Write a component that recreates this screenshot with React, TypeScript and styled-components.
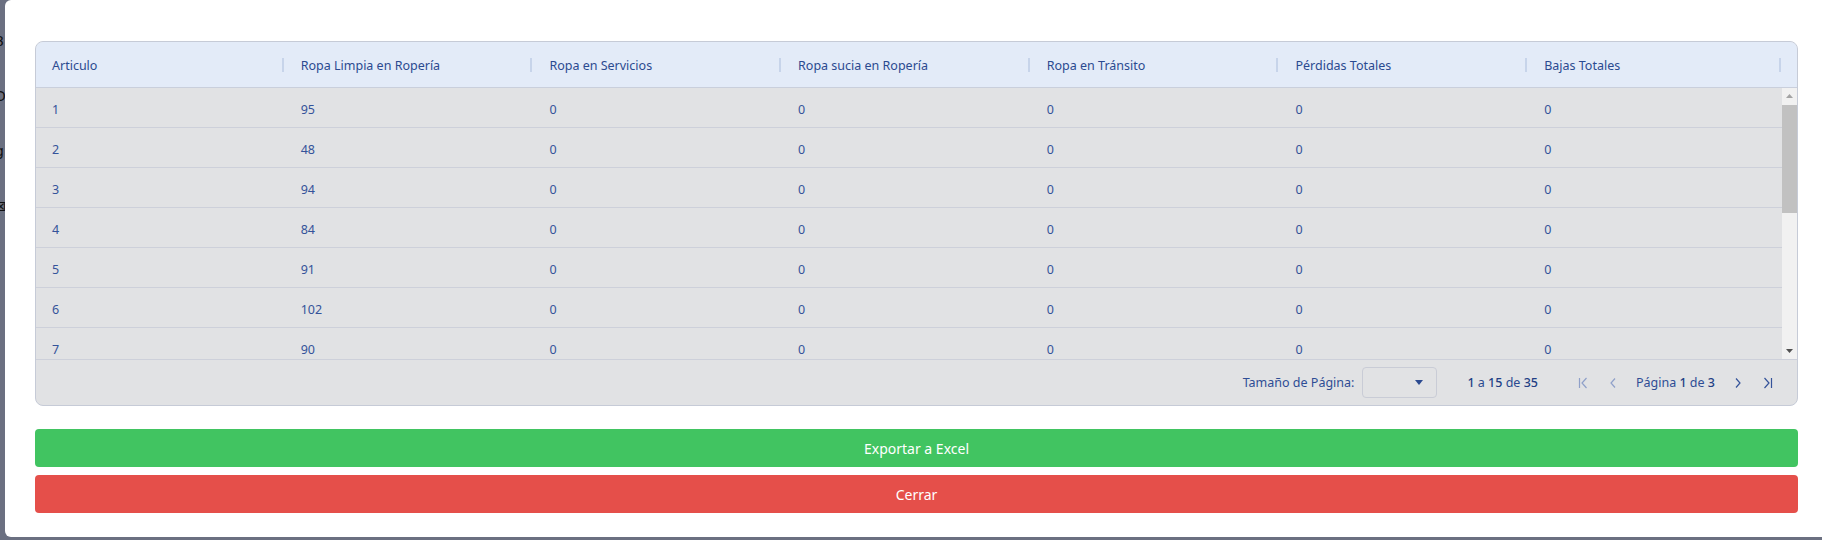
import React from "react";
import styled, { createGlobalStyle } from "styled-components";

const GlobalStyle = createGlobalStyle`
  html, body {
    margin: 0;
    padding: 0;
    background: #6b7081;
    overflow: hidden;
  }
  body {
    font-family: "Noto Sans", "Open Sans", "Liberation Sans", sans-serif;
  }
  * { box-sizing: border-box; }
`;

const Page = styled.div`
  display: flex;
  width: 1822px;
  height: 540px;
  overflow: hidden;
`;

const BehindStrip = styled.div`
  flex: none;
  width: 5px;
  overflow: hidden;
  display: flex;
  flex-direction: column;
  padding-top: 33px;
  gap: 39px;
  color: #111;
  font-family: "DejaVu Sans", sans-serif;
  font-size: 14px;
  line-height: 16px;
`;

const Glyph = styled.span`
  display: block;
  height: 16px;
  margin-left: -5px;
`;

const Modal = styled.div`
  flex: none;
  width: 1823px;
  height: 537px;
  background: #ffffff;
  border-radius: 6px;
  padding: 41px 24px 25px 30px;
  display: flex;
  flex-direction: column;
`;

const Content = styled.div`
  width: 1763px;
  display: flex;
  flex-direction: column;
`;

const Grid = styled.div`
  border: 1px solid #c6cbd7;
  border-radius: 8px;
  overflow: hidden;
  background: #e1e2e4;
  display: flex;
  flex-direction: column;
  color: #2e4d95;
  font-size: 12.5px;
`;

const COLS = "repeat(6, 248.7px) 1fr";

const HeaderRow = styled.div`
  display: grid;
  grid-template-columns: ${COLS} 15px;
  height: 46px;
  background: #e3ebf8;
  border-bottom: 1px solid #c9cfdc;
`;

const HeaderCell = styled.div`
  position: relative;
  display: flex;
  align-items: center;
  padding: 2px 16px 0 16px;
  color: #2b4a90;
  white-space: nowrap;
`;

const Separator = styled.span`
  position: absolute;
  right: 1px;
  top: 16px;
  width: 2px;
  height: 14px;
  background: #c7d4ea;
`;

const Body = styled.div`
  display: flex;
  height: 271px;
`;

const Rows = styled.div`
  flex: 1;
  overflow: hidden;
`;

const Row = styled.div`
  display: grid;
  grid-template-columns: ${COLS};
  height: 40px;
  border-bottom: 1px solid #cdd0da;
`;

const Cell = styled.div`
  display: flex;
  align-items: center;
  padding: 3px 16px 0 16px;
  color: #34539a;
  white-space: nowrap;
`;

const Scrollbar = styled.div`
  flex: none;
  width: 15px;
  background: #f1f1f1;
  display: flex;
  flex-direction: column;
  align-items: stretch;
`;

const ScrollArrow = styled.div<{ $dim?: boolean }>`
  flex: none;
  height: 16px;
  display: flex;
  align-items: center;
  justify-content: center;
  color: ${(p) => (p.$dim ? "#a3a3a3" : "#505050")};
`;

const ScrollTrack = styled.div`
  flex: 1;
  display: flex;
  flex-direction: column;
  padding: 1px 0 0 0;
`;

const Thumb = styled.div`
  height: 108px;
  background: #c1c1c1;
`;

const Footer = styled.div`
  display: flex;
  align-items: center;
  justify-content: flex-end;
  height: 46px;
  border-top: 1px solid #cdd0da;
  padding: 0 21px 0 0;
  color: #2e4d95;
  white-space: nowrap;
`;

const PageSizeLabel = styled.span`
  margin-right: 8px;
`;

const Select = styled.div`
  width: 75px;
  height: 31px;
  border: 1px solid #c9ccd6;
  border-radius: 4px;
  display: flex;
  align-items: center;
  justify-content: flex-end;
  padding-right: 13px;
  color: #2b4a90;
`;

const Summary = styled.span`
  margin-left: 30px;
  margin-right: 37px;
  color: #2b4a90;
`;

const Num = styled.span`
  font-weight: 500;
  color: #233f85;
`;

const Nav = styled.div`
  display: flex;
  align-items: center;
  gap: 14px;
`;

const NavButton = styled.span<{ $disabled?: boolean }>`
  width: 16px;
  height: 16px;
  display: flex;
  align-items: center;
  justify-content: center;
  color: ${(p) => (p.$disabled ? "#8fa0c9" : "#34539a")};
`;

const PageText = styled.span`
  padding: 0 1px;
`;

const Buttons = styled.div`
  display: flex;
  flex-direction: column;
  gap: 8px;
  margin-top: 23px;
`;

const ActionButton = styled.button<{ $variant: "green" | "red" }>`
  height: 38px;
  width: 100%;
  border: none;
  border-radius: 4px;
  background: ${(p) => (p.$variant === "green" ? "#41c461" : "#e54f4a")};
  color: #ffffff;
  font-family: "Noto Sans", "Open Sans", sans-serif;
  font-size: 14px;
  padding: 0;
  cursor: pointer;
`;

const columns = [
  "Articulo",
  "Ropa Limpia en Ropería",
  "Ropa en Servicios",
  "Ropa sucia en Ropería",
  "Ropa en Tránsito",
  "Pérdidas Totales",
  "Bajas Totales",
];

const limpia = [95, 48, 94, 84, 91, 102, 90, 88, 76, 99, 93, 81, 87, 92, 85];
const rows = limpia.map((v, i) => [i + 1, v, 0, 0, 0, 0, 0]);

const FirstIcon = () => (
  <svg width="16" height="16" viewBox="0 0 16 16" fill="none" stroke="currentColor" strokeWidth="1.2">
    <line x1="4.5" y1="3" x2="4.5" y2="13" />
    <polyline points="11.5,3 7,8 11.5,13" />
  </svg>
);
const PrevIcon = () => (
  <svg width="16" height="16" viewBox="0 0 16 16" fill="none" stroke="currentColor" strokeWidth="1.2">
    <polyline points="10,3.5 6,8 10,12.5" />
  </svg>
);
const NextIcon = () => (
  <svg width="16" height="16" viewBox="0 0 16 16" fill="none" stroke="currentColor" strokeWidth="1.2">
    <polyline points="6,3.5 10,8 6,12.5" />
  </svg>
);
const LastIcon = () => (
  <svg width="16" height="16" viewBox="0 0 16 16" fill="none" stroke="currentColor" strokeWidth="1.2">
    <polyline points="4.5,3 9,8 4.5,13" />
    <line x1="11.5" y1="3" x2="11.5" y2="13" />
  </svg>
);
const Triangle = ({ up, w = 8, h = 5 }: { up?: boolean; w?: number; h?: number }) => (
  <svg width={w} height={h} viewBox={`0 0 ${w} ${h}`} fill="currentColor">
    {up ? <polygon points={`0,${h} ${w / 2},0 ${w},${h}`} /> : <polygon points={`0,0 ${w},0 ${w / 2},${h}`} />}
  </svg>
);

export default function App() {
  return (
    <>
      <GlobalStyle />
      <Page>
        <BehindStrip>
          <Glyph>8</Glyph>
          <Glyph>D</Glyph>
          <Glyph>g</Glyph>
          <Glyph>⊠</Glyph>
        </BehindStrip>
        <Modal>
          <Content>
            <Grid>
              <HeaderRow>
                {columns.map((c) => (
                  <HeaderCell key={c}>
                    {c}
                    <Separator />
                  </HeaderCell>
                ))}
                <div />
              </HeaderRow>
              <Body>
                <Rows>
                  {rows.map((r) => (
                    <Row key={r[0]}>
                      {r.map((v, j) => (
                        <Cell key={j}>{v}</Cell>
                      ))}
                    </Row>
                  ))}
                </Rows>
                <Scrollbar>
                  <ScrollArrow $dim>
                    <Triangle up w={7} h={4} />
                  </ScrollArrow>
                  <ScrollTrack>
                    <Thumb />
                  </ScrollTrack>
                  <ScrollArrow>
                    <Triangle w={7} h={4} />
                  </ScrollArrow>
                </Scrollbar>
              </Body>
              <Footer>
                <PageSizeLabel>Tamaño de Página:</PageSizeLabel>
                <Select>
                  <Triangle />
                </Select>
                <Summary>
                  <Num>1</Num> a <Num>15</Num> de <Num>35</Num>
                </Summary>
                <Nav>
                  <NavButton $disabled>
                    <FirstIcon />
                  </NavButton>
                  <NavButton $disabled>
                    <PrevIcon />
                  </NavButton>
                  <PageText>
                    Página <Num>1</Num> de <Num>3</Num>
                  </PageText>
                  <NavButton>
                    <NextIcon />
                  </NavButton>
                  <NavButton>
                    <LastIcon />
                  </NavButton>
                </Nav>
              </Footer>
            </Grid>
            <Buttons>
              <ActionButton $variant="green">Exportar a Excel</ActionButton>
              <ActionButton $variant="red">Cerrar</ActionButton>
            </Buttons>
          </Content>
        </Modal>
      </Page>
    </>
  );
}
